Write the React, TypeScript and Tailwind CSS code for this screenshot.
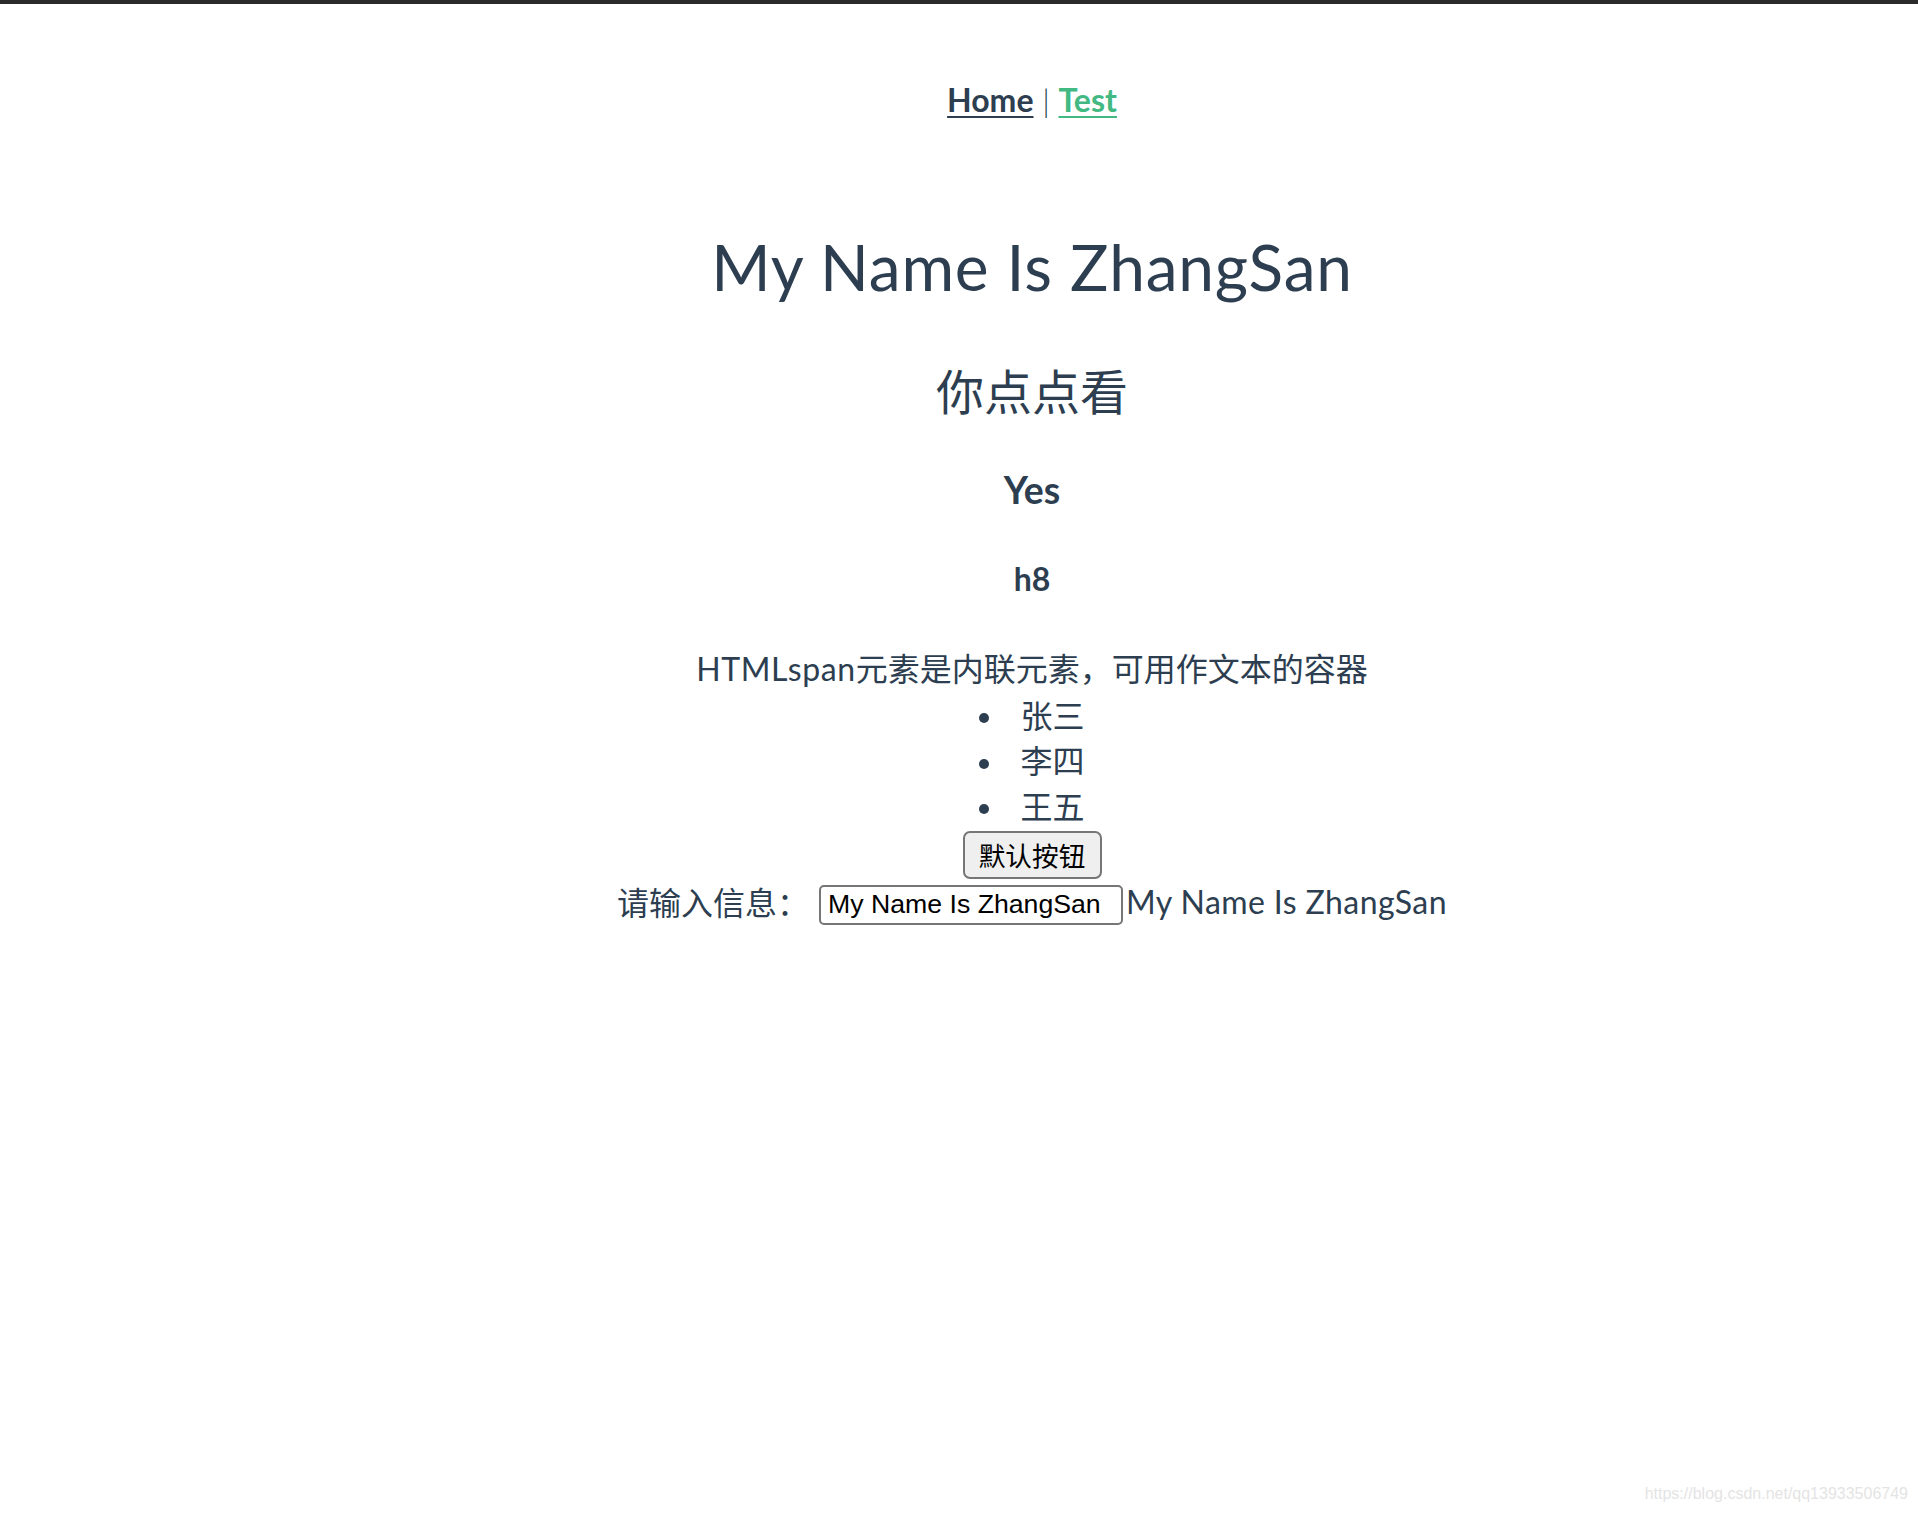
import React from "react";

const latin = "font-['Lato','Noto_Sans_CJK_SC',sans-serif]";
const cjk = "font-['Noto_Sans_CJK_SC','Lato',sans-serif]";

export default function App() {
  const items = ["张三", "李四", "王五"];
  return (
    <div className="h-[1514px] w-full bg-white flex flex-col overflow-hidden">
      <div className="h-[4px] w-full bg-[#2b2b2b] shrink-0" />
      <div className={`pl-[146px] flex flex-col items-center text-center text-[#2c3e50] ${latin}`}>
        <nav className="mt-[76px] h-[40px] leading-[40px] text-[32px] whitespace-pre">
          <a href="#" className="font-bold text-[#2c3e50] underline decoration-[2px] underline-offset-[4px]">Home</a>
          <span className="font-light"> | </span>
          <a href="#" className="font-bold text-[#42b983] underline decoration-[2px] underline-offset-[4px]">Test</a>
        </nav>
        <h1 className="mt-[107px] h-[80px] leading-[80px] text-[64px] font-normal tracking-[0.8px]">My Name Is ZhangSan</h1>
        <h2 className={`mt-[52px] h-[60px] leading-[60px] text-[48px] font-normal ${cjk}`}>你点点看</h2>
        <h3 className="mt-[47px] h-[48px] leading-[48px] text-[37.44px] font-bold">Yes</h3>
        <div className="mt-[45px] h-[40px] leading-[40px] text-[32px] font-bold">h8</div>
        <div className="mt-[47px] h-[45.5px] leading-[45.5px] text-[32px]">
          <span className="tracking-[0.6px]">HTMLspan</span>元素是内联元素，可用作文本的容器
        </div>
        <ul className="flex flex-col items-center">
          {items.map((t) => (
            <li key={t} className="h-[45.5px] leading-[45.5px] text-[32px] flex items-center gap-[31px]">
              <span className="block w-[10px] h-[10px] mt-[8px] rounded-full bg-[#2c3e50]" />
              <span className={`block ${cjk}`}>{t}</span>
            </li>
          ))}
        </ul>
        <button className={`mt-[2.5px] w-[139px] h-[48px] border-2 border-[#767676] bg-[#efefef] rounded-[7px] text-[26.67px] leading-[44px] text-black ${cjk}`}>
          默认按钮
        </button>
        <div className="mt-[6px] h-[40px] flex items-center">
          <span className={`text-[32px] leading-[40px] pb-[8px] ${cjk}`}>请输入信息：</span>
          <input
            defaultValue="My Name Is ZhangSan"
            className="ml-[10px] w-[304px] h-[40px] border-2 border-[#767676] rounded-[5px] px-[7px] text-[26.67px] text-black bg-white font-['Liberation_Sans',Arial,sans-serif] outline-none"
          />
          <span className="ml-[3px] text-[32px] leading-[40px] pb-[6px] tracking-[0.4px]">My Name Is ZhangSan</span>
        </div>
      </div>
      <div className="mt-auto mb-[8px] pr-[10px] self-end text-[16px] text-[#e4e4e4] font-['Liberation_Sans',Arial,sans-serif]">
        https://blog.csdn.net/qq13933506749
      </div>
    </div>
  );
}
